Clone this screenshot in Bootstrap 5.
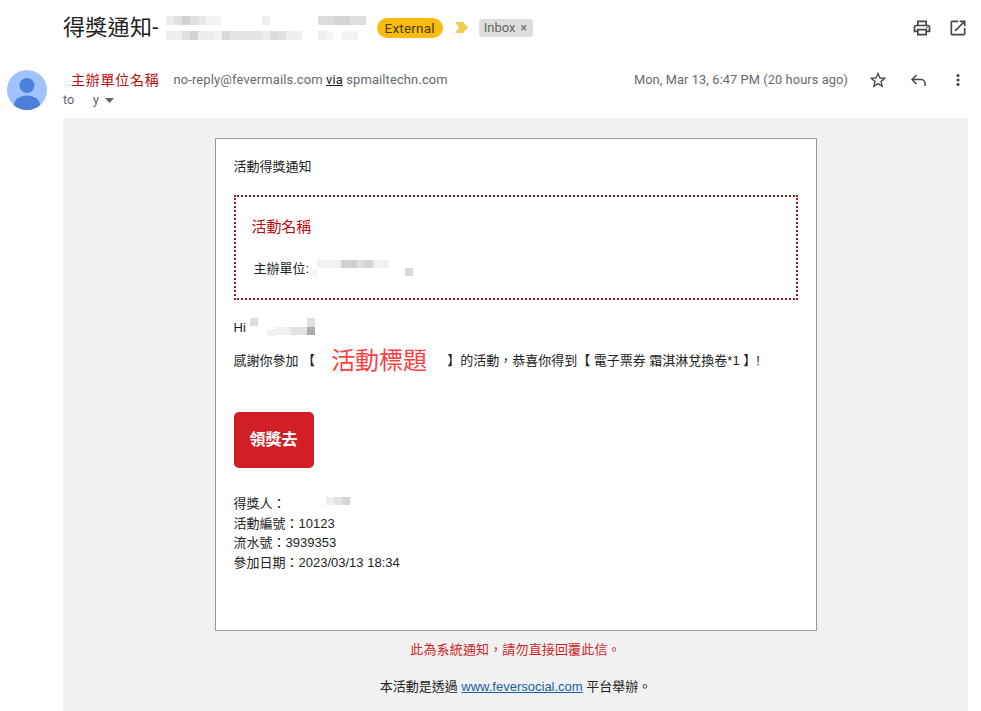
<!DOCTYPE html>
<html lang="zh-Hant">
<head>
<meta charset="utf-8">
<title>得獎通知</title>
<link href="https://cdn.jsdelivr.net/npm/bootstrap@5.3.0/dist/css/bootstrap.min.css" rel="stylesheet">
<style>
html,body{height:711px;overflow:hidden;background:#fff}
body{font-family:"Liberation Sans","Noto Sans CJK TC",sans-serif;font-size:13px;color:#222}
.gm{font-family:Roboto,"Noto Sans CJK TC",sans-serif}
.subject-row{height:55px;padding:0 13px 0 63px}
.subject{font-size:22px;color:#222;line-height:28px;letter-spacing:.3px}
.mos{display:block;flex:none}
.mos-subject{margin-left:6px}
.chip-ext{background:#f9bb0d;color:#4d3c00;border-radius:10px;font-size:13.500px;height:20px;line-height:20px;padding:0 8px;letter-spacing:.2px;margin-left:11px}
.marker{margin-left:12px}
.chip-inbox{background:#ddd;color:#666;border-radius:3px;font-size:13px;height:18px;line-height:18px;padding:0 6px 0 5px;margin-left:11px}
.chip-x{font-size:12px;margin-left:5px}
.print-ico{margin-right:16px}
.sender-row{padding:0 13px 0 7px;height:63px}
.avatar{width:40px;height:40px;margin-right:16px;margin-top:15px}
.sender-body{padding-top:15px}
.sender-line{height:20px}
.sender{font-size:14px;color:#bd0a0a;margin-left:8px;letter-spacing:.75px;line-height:20px}
.addr{font-size:13px;color:#666a6e;letter-spacing:.1px;margin-left:14px}
.addr u{color:#222}
.to{font-size:12.500px;color:#5f6368;line-height:16px;margin-top:2px}
.to-gap{width:19px}
.to-caret{margin-left:6px}
.stamp{font-size:12.800px;color:#666a6e;letter-spacing:.1px}
.ico{display:block;fill:#444746}
.star-ico{margin-left:20px}
.reply-ico{margin-left:21px}
.more-ico{margin-left:19px}
.gray{margin:0 13px 0 63px;background:#f1f1f1;padding-top:20px;height:593px}
.mail{width:602px;height:493px;margin:0 auto;border:1px solid #999;border-radius:0;padding:19px 18px 0;background:#fff}
.mail p{margin:0}
.line1{line-height:17px}
.dotted{border:2px dotted #8c1c1c;height:105px;margin-top:20px;padding:13px 0 0 16px}
.evname{font-size:15px;color:#bd0a0a;line-height:34px;letter-spacing:-.1px}
.host{margin:14px 0 0 2px;line-height:22px}
.hi{margin-top:18px!important;line-height:20px}
.thanks{margin-top:8px!important;line-height:30px;white-space:nowrap;display:flex;align-items:center}
.big{font-size:24px;color:#fc3f3f;margin:0 20px 0 16px;line-height:30px}
.claim{display:block;width:80px;height:56px;margin-top:36px;background:#d21f27;color:#fff;font-size:16px;font-weight:700;border:0;border-radius:5px;padding:0;line-height:56px;text-align:center}
.claim:hover{background:#d21f27;color:#fff}
.info{margin-top:26px!important;line-height:19.5px}
.warn{color:#d21f27;margin-top:9px;line-height:20px;letter-spacing:.15px}
.plat{margin-top:17px;line-height:20px;color:#222}
.plat a{color:#1a5ea8}
.infoname{display:inline-block;vertical-align:-1px}
</style>
</head>
<body>
<div class="subject-row d-flex align-items-center">
  <span class="subject gm">得獎通知-</span>
  <svg class="mos mos-subject" width="201" height="26" viewBox="0 0 201 26" aria-hidden="true">
    <g fill="#d6d6d6">
      <rect x="1" y="1" width="8" height="9" fill="#ececec"/><rect x="9" y="1" width="8" height="9" fill="#e0e0e0"/><rect x="17" y="1" width="8" height="9" fill="#d2d2d2"/><rect x="25" y="1" width="8" height="9" fill="#e0e0e0"/><rect x="33" y="1" width="8" height="9" fill="#e8e8e8"/><rect x="41" y="1" width="15" height="9" fill="#f2f2f2"/>
      <rect x="97" y="1" width="8" height="9" fill="#eeeeee"/>
      <rect x="153" y="1" width="16" height="9" fill="#dcdcdc"/><rect x="169" y="1" width="16" height="9" fill="#d4d4d4"/><rect x="185" y="1" width="16" height="9" fill="#dedede"/>
      <rect x="1" y="16" width="16" height="9" fill="#eeeeee"/><rect x="17" y="16" width="8" height="9" fill="#e0e0e0"/><rect x="25" y="16" width="8" height="9" fill="#d2d2d2"/><rect x="33" y="16" width="16" height="9" fill="#ececec"/><rect x="49" y="16" width="8" height="9" fill="#f2f2f2"/><rect x="57" y="16" width="8" height="9" fill="#d9d9d9"/><rect x="65" y="16" width="32" height="9" fill="#e4e4e4"/><rect x="97" y="16" width="8" height="9" fill="#ececec"/><rect x="105" y="16" width="8" height="9" fill="#dcdcdc"/><rect x="113" y="16" width="8" height="9" fill="#e0e0e0"/><rect x="121" y="16" width="16" height="9" fill="#eeeeee"/>
      <rect x="153" y="16" width="8" height="9" fill="#eeeeee"/><rect x="161" y="16" width="8" height="9" fill="#f6f6f6"/><rect x="177" y="16" width="16" height="9" fill="#f2f2f2"/>
    </g>
  </svg>
  <span class="chip-ext gm">External</span>
  <svg class="mos marker" width="13" height="11" viewBox="0 0 13 11" aria-hidden="true"><path d="M0 0h8l5 5.500-5 5.500H0l4-5.500z" fill="#f6cb4f"/></svg>
  <span class="chip-inbox gm">Inbox<span class="chip-x">×</span></span>
  <div class="ms-auto d-flex align-items-center">
    <svg class="ico print-ico" width="20" height="20" viewBox="0 0 24 24" aria-hidden="true"><path d="M19 8h-1V3H6v5H5c-1.660 0-3 1.340-3 3v6h4v4h12v-4h4v-6c0-1.660-1.340-3-3-3zM8 5h8v3H8V5zm8 12v2H8v-4h8v2zm2-2v-2H6v2H4v-4c0-.55.45-1 1-1h14c.55 0 1 .45 1 1v4h-2z"/><circle cx="18" cy="11.500" r="1"/></svg>
    <svg class="ico" width="20" height="20" viewBox="0 0 24 24" aria-hidden="true"><path d="M19 19H5V5h7V3H5a2 2 0 00-2 2v14a2 2 0 002 2h14c1.100 0 2-.9 2-2v-7h-2v7zM14 3v2h3.590l-9.830 9.830 1.410 1.410L19 6.410V10h2V3h-7z"/></svg>
  </div>
</div>
<div class="sender-row d-flex">
  <svg class="avatar mos" viewBox="0 0 40 40" aria-hidden="true"><defs><clipPath id="av"><circle cx="20" cy="20" r="20"/></clipPath></defs><g clip-path="url(#av)"><rect width="40" height="40" fill="#a0c3ff"/><circle cx="20" cy="15.500" r="7.500" fill="#4a7fdc"/><ellipse cx="20" cy="35" rx="13" ry="9.500" fill="#4a7fdc"/></g></svg>
  <div class="flex-grow-1 gm sender-body">
    <div class="d-flex align-items-center sender-line">
      <span class="sender">主辦單位名稱</span>
      <span class="addr">no-reply@fevermails.com <u>via</u> spmailtechn.com</span>
      <span class="stamp ms-auto">Mon, Mar 13, 6:47 PM (20 hours ago)</span>
      <svg class="ico star-ico" width="20" height="20" viewBox="0 0 24 24" aria-hidden="true"><path d="M22 9.240l-7.190-.62L12 2 9.190 8.630 2 9.240l5.460 4.730L5.820 21 12 17.270 18.180 21l-1.630-7.030L22 9.240zM12 15.400l-3.760 2.270 1-4.280-3.320-2.880 4.380-.38L12 6.100l1.710 4.040 4.380.38-3.320 2.880 1 4.280L12 15.400z"/></svg>
      <svg class="ico reply-ico" width="20" height="20" viewBox="0 0 20 20" aria-hidden="true"><path d="M7.500 5 3 9.500 7.500 14M3.500 9.500h8.500a4 4 0 0 1 4 4V16" fill="none" stroke="#444746" stroke-width="1.500"/></svg>
      <svg class="ico more-ico" width="20" height="20" viewBox="0 0 20 20" aria-hidden="true"><circle cx="10" cy="5.500" r="1.600"/><circle cx="10" cy="10" r="1.600"/><circle cx="10" cy="14.500" r="1.600"/></svg>
    </div>
    <div class="to d-flex align-items-center">to<span class="to-gap"></span><span>y</span><svg class="mos to-caret" width="9" height="5" viewBox="0 0 9 5" aria-hidden="true"><path d="M0 0h9L4.500 5z" fill="#5f6368"/></svg></div>
  </div>
</div>
<div class="gray text-center">
  <div class="card mail text-start">
    <p class="line1">活動得獎通知</p>
    <div class="dotted">
      <div class="evname">活動名稱</div>
      <div class="host d-flex align-items-center">主辦單位:
        <svg class="mos" width="106" height="22" viewBox="0 0 106 22" aria-hidden="true"><rect x="0" y="11" width="8" height="8" fill="#f7f5ef"/><rect x="8" y="2" width="24" height="8" fill="#f0f0f0"/><rect x="32" y="2" width="16" height="8" fill="#d0d0d0"/><rect x="48" y="2" width="8" height="8" fill="#dedede"/><rect x="56" y="2" width="8" height="8" fill="#d4d4d4"/><rect x="64" y="2" width="16" height="8" fill="#f0f0f0"/><rect x="96" y="10" width="8" height="8" fill="#d8d8d8"/></svg>
      </div>
    </div>
    <p class="hi d-flex align-items-center">Hi
      <svg class="mos ms-1" width="70" height="20" viewBox="0 0 70 20" aria-hidden="true"><rect x="0" y="0" width="8" height="8" fill="#dcdcdc"/><rect x="17" y="11" width="8" height="7" fill="#f2f2f2"/><rect x="25" y="9" width="16" height="8" fill="#f0f0f0"/><rect x="41" y="9" width="16" height="8" fill="#e2e2e2"/><rect x="57" y="0" width="8" height="9" fill="#e0e0e0"/><rect x="57" y="9" width="8" height="8" fill="#a9aeb2"/></svg>
    </p>
    <p class="thanks">感謝你參加 【<span class="big">活動標題</span>】的活動，恭喜你得到【 電子票券 霜淇淋兌換卷*1 】!</p>
    <a class="btn claim" href="#">領獎去</a>
    <p class="info">得獎人：<svg class="mos infoname" width="66" height="12" viewBox="0 0 66 12" aria-hidden="true"><rect x="40" y="0" width="8" height="8" fill="#eeeeee"/><rect x="48" y="0" width="8" height="8" fill="#e2e2e2"/><rect x="56" y="0" width="8" height="8" fill="#d4d4d4"/></svg><br>活動編號：10123<br>流水號：3939353<br>參加日期：2023/03/13 18:34</p>
  </div>
  <div class="warn">此為系統通知，請勿直接回覆此信。</div>
  <div class="plat">本活動是透過 <a href="#">www.feversocial.com</a> 平台舉辦。</div>
</div>
<script src="https://cdn.jsdelivr.net/npm/bootstrap@5.3.0/dist/js/bootstrap.bundle.min.js"></script>
</body>
</html>
